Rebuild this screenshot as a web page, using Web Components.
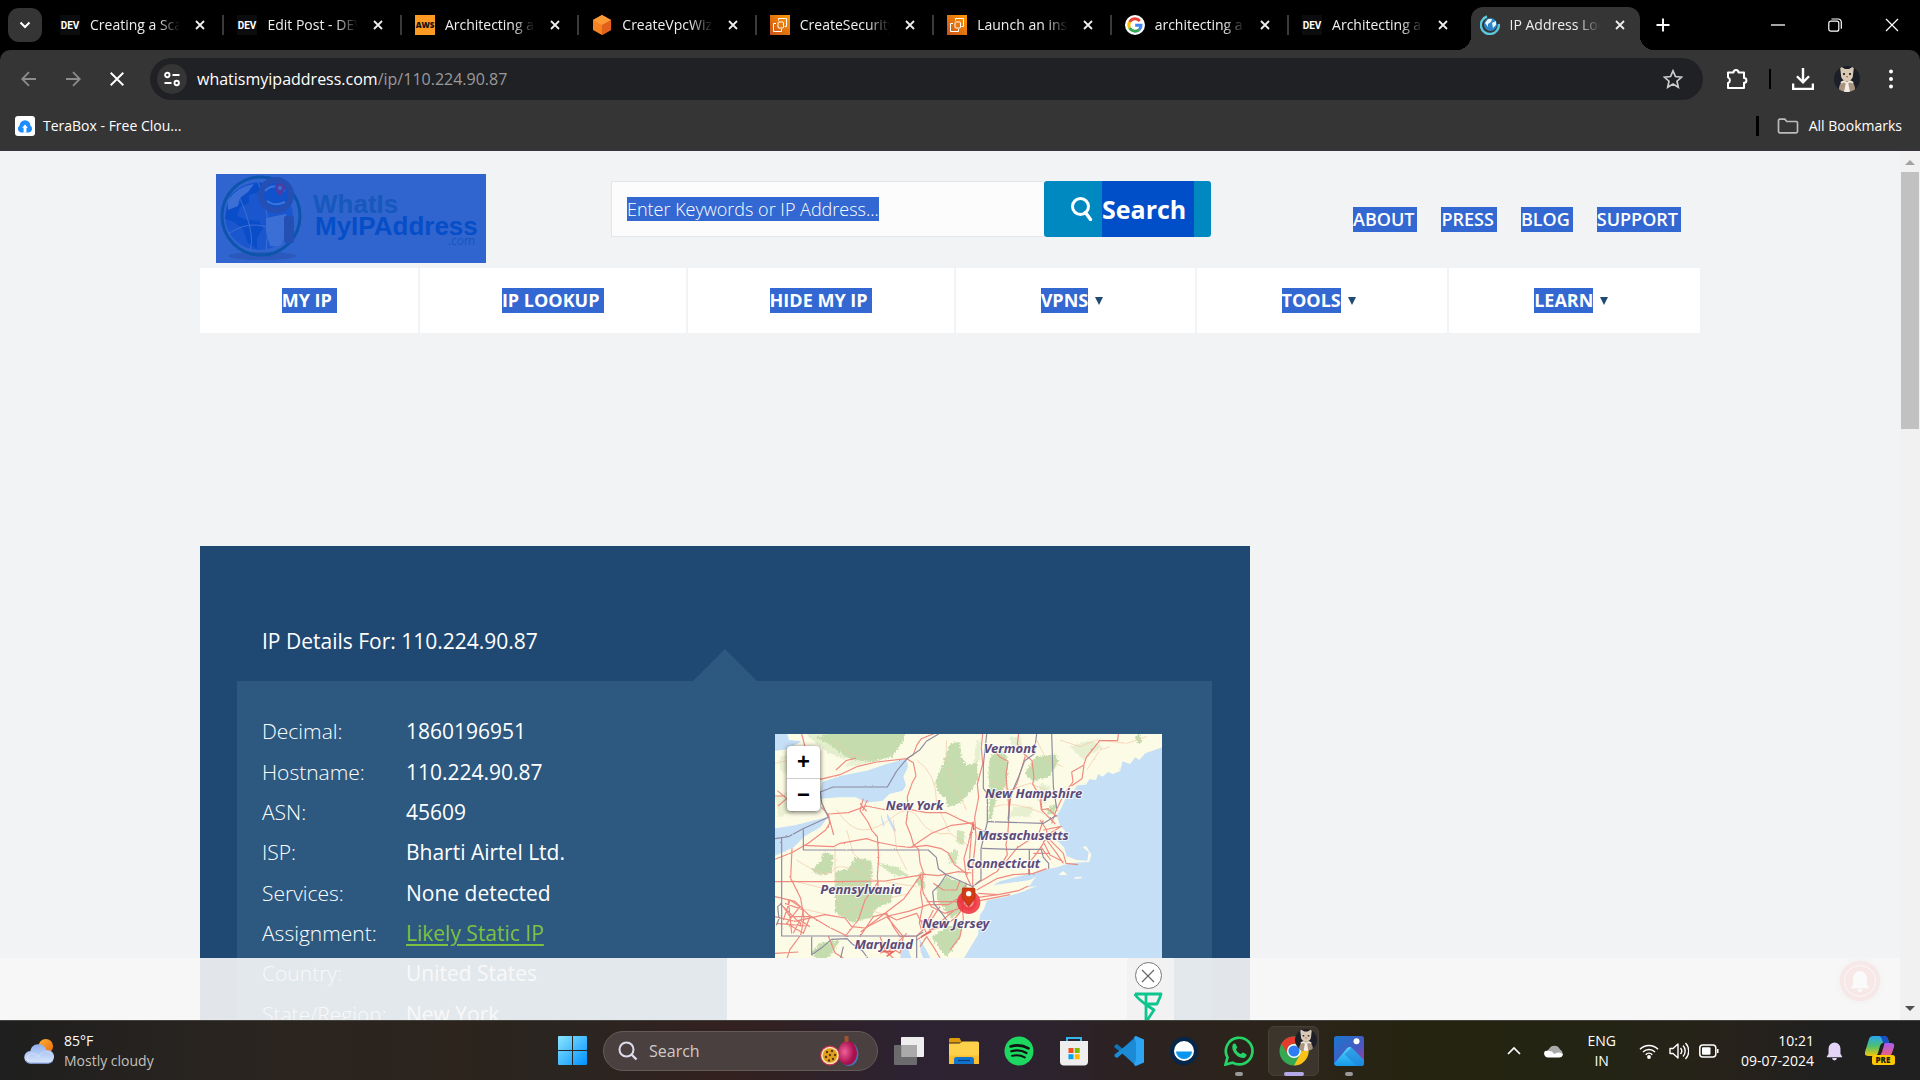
<!DOCTYPE html>
<html lang="en">
<head>
<meta charset="utf-8">
<title>IP Address Lookup</title>
<style>
  html, body { height: 100%; margin: 0; }
  body {
    display: flex;
    flex-direction: column;
    overflow: hidden;
    background: #000;
    font-family: "Open Sans", "Noto Sans", sans-serif;
  }
  site-page { flex: 1; min-height: 0; }
</style>
</head>
<body>

<tab-strip>
  <browser-tab icon="dev">Creating a Scal</browser-tab>
  <browser-tab icon="dev">Edit Post - DEV</browser-tab>
  <browser-tab icon="aws">Architecting a</browser-tab>
  <browser-tab icon="vpc">CreateVpcWiz</browser-tab>
  <browser-tab icon="ec2">CreateSecurity</browser-tab>
  <browser-tab icon="ec2">Launch an inst</browser-tab>
  <browser-tab icon="google">architecting a</browser-tab>
  <browser-tab icon="dev">Architecting a</browser-tab>
  <browser-tab icon="globe" active>IP Address Loo</browser-tab>
</tab-strip>

<address-bar host="whatismyipaddress.com" path="/ip/110.224.90.87"></address-bar>
<bookmark-bar>TeraBox - Free Clou...</bookmark-bar>

<site-page>
  <site-header></site-header>
  <site-nav>
    <nav-item>MY IP&nbsp;</nav-item>
    <nav-item>IP LOOKUP&nbsp;</nav-item>
    <nav-item>HIDE MY IP&nbsp;</nav-item>
    <nav-item menu>VPNS</nav-item>
    <nav-item menu>TOOLS</nav-item>
    <nav-item menu>LEARN</nav-item>
  </site-nav>
  <ip-details ip="110.224.90.87"></ip-details>
  <ad-banner slot="overlay"></ad-banner>
</site-page>

<task-bar></task-bar>

<script>
// name: [viewBox, markup]
const ICONS = {
  dev: ['0 0 20 20', `<rect width="20" height="20" fill="#0b0c0e"/><text x="10" y="14" text-anchor="middle" font-family="Roboto" font-weight="700" font-size="10" fill="#fff">DEV</text>`],
  aws: ['0 0 20 20', `<rect width="20" height="20" fill="#ff9a22"/><text x="10" y="13" text-anchor="middle" font-family="Open Sans" font-weight="800" font-size="8" fill="#111">AWS</text>`],
  vpc: ['0 0 20 20', `<path d="M10 0l9 5v10l-9 5-9-5V5z" fill="#f58220"/><path d="M10 0l9 5-9 5-9-5z" fill="#fb9a35"/><path d="M10 10l9-5v10l-9 5z" fill="#e2601b"/>`],
  ec2: ['0 0 20 20', `<defs><linearGradient id="g" x1="0" y1="1" x2="1" y2="0"><stop offset="0" stop-color="#c8511b"/><stop offset="1" stop-color="#ff9900"/></linearGradient></defs><rect width="20" height="20" fill="url(#g)"/><g fill="none" stroke="#fff" stroke-width="1"><rect x="8" y="7" width="5.500" height="6" rx="1"/><path d="M8.500 5.500V3.500h8v8h-2M6 8.500H3.500v8h8V14"/></g>`],
  google: ['0 0 20 20', `<circle cx="10" cy="10" r="10" fill="#fff"/><g fill="none" stroke-width="3"><path d="M14.800 6A6.200 6.200 0 0 0 4.600 7" stroke="#ea4335"/><path d="M4.600 7a6.200 6.200 0 0 0 0 6" stroke="#fbbc05"/><path d="M4.600 13a6.200 6.200 0 0 0 9.600 1.600" stroke="#34a853"/><path d="M14.200 14.600A6 6 0 0 0 16 10.200H10.200" stroke="#4285f4"/></g>`],
  globe: ['0 0 20 20', `<path d="M7 1.500A9 9 0 1 0 18.800 9" fill="none" stroke="#5cc8dc" stroke-width="2.400"/><circle cx="10.500" cy="9.500" r="6.500" fill="#2a86c8"/><path d="M5 8l3-4 4 0-1 3-3 2 0 3zM12 8l4-2 0 4-3 3z" fill="#e8f4fb"/>`],
  close: ['0 0 10 10', `<path d="M1 1l8 8M9 1l-8 8" stroke="currentColor" stroke-width="1.800"/>`],
  thinClose: ['0 0 14 14', `<path d="M1 1l12 12M13 1L1 13" stroke="currentColor" stroke-width="1.200"/>`],
  stop: ['0 0 14 14', `<path d="M1.500 1.500l11 11M12.500 1.500l-11 11" stroke="currentColor" stroke-width="1.700"/>`],
  minus: ['0 0 14 14', `<path d="M0 7h14" stroke="currentColor" stroke-width="1.300"/>`],
  restore: ['0 0 14 14', `<g fill="none" stroke="currentColor" stroke-width="1.200"><rect x=".8" y="3.200" width="10" height="10" rx="2"/><path d="M3.500 1h6.500a3.300 3.300 0 0 1 3.300 3.300v6.500"/></g>`],
  plus: ['0 0 14 14', `<path d="M7 .5v13M.5 7h13" stroke="currentColor" stroke-width="1.900"/>`],
  chevron: ['0 0 12 8', `<path d="M1.500 1.500L6 6l4.500-4.500" fill="none" stroke="currentColor" stroke-width="2"/>`],
  up: ['0 0 14 9', `<path d="M1 8l6-6 6 6" fill="none" stroke="currentColor" stroke-width="1.700"/>`],
  back: ['0 0 16 16', `<path d="M15 8H1.500M8 1.200L1.200 8 8 14.800" fill="none" stroke="currentColor" stroke-width="1.800"/>`],
  forward: ['0 0 16 16', `<path d="M1 8h13.500M8 1.200L14.800 8 8 14.800" fill="none" stroke="currentColor" stroke-width="1.800"/>`],
  tune: ['0 0 16 14', `<g fill="none" stroke="currentColor" stroke-width="1.900"><circle cx="3.300" cy="3" r="2.200"/><path d="M8.500 3H15.500M.5 11H7.500"/><circle cx="12.700" cy="11" r="2.200"/></g>`],
  terabox: ['0 0 20 20', `<rect width="20" height="20" rx="3" fill="#fff"/><path d="M6 16.500A3.800 3.800 0 0 1 4.600 9.600 5.400 5.400 0 0 1 15.400 9.600 3.800 3.800 0 0 1 14 16.500z" fill="#1e8cff"/><path d="M10 8.500l-2.800 3.300h1.400v5h2.800v-5h1.400z" fill="#fff"/>`],
  star: ['0 0 20 20', `<path d="M10 1.800l2.500 5.700 6.100.6-4.600 4.100 1.300 6.100L10 15.100l-5.300 3.200L6 12.200 1.400 8.100l6.100-.6z" fill="none" stroke="currentColor" stroke-width="1.700"/>`],
  puzzle: ['0 0 22 22', `<path d="M2 4.500h5.500a2.500 2.500 0 0 1 5 0H18v5.500a2.400 2.400 0 0 1 0 4.800V20H2v-5a3 3 0 0 0 0-5.600z" fill="none" stroke="currentColor" stroke-width="2" stroke-linejoin="round"/>`],
  download: ['0 0 20 20', `<path d="M10 0v12M4.500 7.500L10 13l5.500-5.500M1 14v5h18v-5" fill="none" stroke="currentColor" stroke-width="2.200"/>`],
  cat: ['0 0 26 26', `<defs><clipPath id="c"><circle cx="13" cy="13" r="13"/></clipPath></defs><g clip-path="url(#c)"><rect width="26" height="26" fill="#1d1f28"/><path d="M5 26C4 19 8 14 13 13c5 1 9 6 8 13z" fill="#a99482"/><path d="M7 9L6 0l5 3h4l5-3-1 9c0 4-3 6-6 6s-6-2-6-6z" fill="#d8c9b6"/><path d="M10 26l2-10h2l2 10z" fill="#f3ede6"/><path d="M9 7h2v2H9zM15 7h2v2h-2z" fill="#3c352f"/><path d="M12 10h2l-1 2z" fill="#b65c4c"/><path d="M7 17q3-3 5 0M19 17q-3-3-5 0" fill="none" stroke="#efe4d8" stroke-width="2"/></g>`],
  dots: ['0 0 4 20', `<g fill="currentColor"><circle cx="2" cy="2.500" r="2"/><circle cx="2" cy="10" r="2"/><circle cx="2" cy="17.500" r="2"/></g>`],
  folder: ['0 0 22 16', `<path d="M1.500 2.500a1.300 1.300 0 0 1 1.300-1.300h5l2 2.300h9.400a1.300 1.300 0 0 1 1.300 1.300v8.700a1.300 1.300 0 0 1-1.300 1.300H2.800a1.300 1.300 0 0 1-1.300-1.300z" fill="none" stroke="currentColor" stroke-width="1.700"/>`],
  lens: ['0 0 22 24', `<circle cx="9.500" cy="9.500" r="8" fill="none" stroke="currentColor" stroke-width="3"/><path d="M14.500 15.500l5 7" stroke="currentColor" stroke-width="3.400" stroke-linecap="round"/>`],
  taskLens: ['0 0 20 20', `<circle cx="8.500" cy="8.500" r="7" fill="none" stroke="#dde" stroke-width="2"/><path d="M13.500 13.500l5 5" stroke="#dde" stroke-width="2.400"/>`],
  weather: ['0 0 32 26', `<defs><linearGradient id="w" x1="0" y1="0" x2="0" y2="1"><stop offset="0" stop-color="#8fb0ee"/><stop offset="1" stop-color="#dce8fb"/></linearGradient><linearGradient id="s" x1="0" y1="0" x2="1" y2="1"><stop offset="0" stop-color="#f9b233"/><stop offset="1" stop-color="#f2680c"/></linearGradient></defs><circle cx="22.500" cy="8" r="7.500" fill="url(#s)"/><path d="M7 26a6.500 6.500 0 0 1-.5-13A8.500 8.500 0 0 1 23 12a7 7 0 0 1 2 14z" fill="url(#w)"/><path d="M8 25.500c-6-1-6-9 0-10 4-.5 6 2 7 4 2-6 9-8 14-3" fill="none" stroke="#fff" stroke-opacity=".35"/><path d="M2 23q2 2.500 5 2.500h18q3 0 5-2.500" fill="none" stroke="#7596e0"/>`],
  windows: ['0 0 30 30', `<defs><linearGradient id="n" x1="0" y1="0" x2="1" y2="1"><stop offset="0" stop-color="#8be6ff"/><stop offset="1" stop-color="#0090ff"/></linearGradient></defs><path d="M0 1a1 1 0 0 1 1-1h13v14H0zM15 0h13a1 1 0 0 1 1 1v13H15zM0 15h14v14H1a1 1 0 0 1-1-1zM15 15h14v13a1 1 0 0 1-1 1H15z" fill="url(#n)"/>`],
  fruit: ['0 0 40 30', `<defs><radialGradient id="p" cx=".35" cy=".45"><stop offset="0" stop-color="#f0609a"/><stop offset="1" stop-color="#a80f4c"/></radialGradient></defs><ellipse cx="29" cy="18" rx="9.500" ry="12" fill="#3c78b8"/><ellipse cx="27.500" cy="17" rx="9.500" ry="12" fill="url(#p)"/><path d="M24.500 0h4v6h-4z" fill="#a0522c"/><circle cx="10" cy="19.500" r="10" fill="#c2334d"/><circle cx="10" cy="19.500" r="8.800" fill="#fbe6b8"/><circle cx="10" cy="19.500" r="7.300" fill="#e0a01c"/><g fill="#5d3510"><circle cx="7" cy="16" r="1.200"/><circle cx="12" cy="15" r="1.200"/><circle cx="15" cy="19" r="1.200"/><circle cx="10" cy="19" r="1.200"/><circle cx="6" cy="21" r="1.200"/><circle cx="9" cy="24.500" r="1.200"/><circle cx="13" cy="23" r="1.200"/></g>`],
  taskview: ['0 0 30 28', `<rect x="7" y="0" width="23" height="20" rx="1" fill="#eee"/><rect x="0" y="8" width="23" height="20" rx="1" fill="#777" fill-opacity=".85"/><path d="M7.500 8H23v12H7.500z" fill="#aaa"/>`],
  explorer: ['0 0 30 27', `<path d="M0 2a1.500 1.500 0 0 1 1.500-1.500h9L13 5H0z" fill="#dd9a0c"/><path d="M0 6h10.500l3-2H28.500A1.500 1.500 0 0 1 30 5.500v21H0z" fill="#ffd04a"/><path d="M0 18h30v8.500H0z" fill="#fbc02f"/><path d="M5 26.500V22a2.500 2.500 0 0 1 2.500-2.500h15A2.500 2.500 0 0 1 25 22v4.500z" fill="#1173cc"/><path d="M9 23h12" stroke="#06407e" stroke-width="1.200"/>`],
  spotify: ['0 0 30 30', `<circle cx="15" cy="15" r="14.500" fill="#1ed760"/><g fill="none" stroke="#111" stroke-linecap="round"><path d="M6.500 10.500c6-1.800 13-1 18 1.800" stroke-width="2.600"/><path d="M7.300 15.300c5.300-1.500 11-.8 15.200 1.700" stroke-width="2.200"/><path d="M8 19.800c4.600-1.200 9-.6 12.800 1.600" stroke-width="1.900"/></g>`],
  store: ['0 0 30 30', `<path d="M8 6V2h14v4" fill="none" stroke="#35b5f0" stroke-width="2"/><path d="M1 5h28v20.500a4 4 0 0 1-4 4H5a4 4 0 0 1-4-4z" fill="#eee"/><path d="M9.500 12h5v5h-5z" fill="#f25022"/><path d="M15.700 12h5v5h-5z" fill="#7fba00"/><path d="M9.500 18.200h5v5h-5z" fill="#00a4ef"/><path d="M15.700 18.200h5v5h-5z" fill="#ffb900"/>`],
  vscode: ['0 0 30 30', `<path d="M22 0L8.500 12.500 3 8 .5 9.500v2L22 28z" fill="#1173b8"/><path d="M22 30L8.500 17.500 3 22 .5 20.500v-2L22 2z" fill="#1c8bd6"/><path d="M22 0l8 3.500v23L22 30l-2-1 2-5.500v-17L20 1z" fill="#2ea5f2"/>`],
  disc: ['0 0 30 30', `<circle cx="15" cy="15" r="14" fill="#04264a"/><circle cx="15" cy="15" r="10" fill="#fff"/><path d="M7 15.500h16a8 7.500 0 0 1-16 0z" fill="#0a95f0"/>`],
  whatsapp: ['0 0 30 30', `<path d="M1.500 28.500l2-7A13.300 13.300 0 1 1 8.500 26.600z" fill="none" stroke="#25d366" stroke-width="2.700"/><path d="M8.600 9c.7-1.500 2.500-1.800 3.200-.8l1.400 3c.2.800-1.200 1.900-1.200 2.200.8 2 2.500 3.700 4.900 4.700.6.100 1.500-1.700 2.200-1.500l3.200 1.600c.8.700-.2 3-1.600 3.500-6.500 1.800-14-6.500-12.100-12.700z" fill="#25d366"/>`],
  chrome: ['0 0 30 30', `<circle cx="15" cy="15" r="14.500" fill="#34a853"/><path d="M2.400 7.700A14.500 14.500 0 0 1 27.600 7.700H15A7 7 0 0 0 9 18.500z" fill="#e33b2e"/><path d="M27.600 7.700A14.500 14.500 0 0 1 15 29.500l6-11a7 7 0 0 0-6-10.800z" fill="#fbc116"/><circle cx="15" cy="15" r="7" fill="#fff"/><circle cx="15" cy="15" r="5.600" fill="#2f7df4"/>`],
  photos: ['0 0 26 26', `<defs><linearGradient id="h" x1="0" y1="0" x2="1" y2="1"><stop offset="0" stop-color="#1878d0"/><stop offset=".6" stop-color="#4a58c0"/><stop offset="1" stop-color="#b03a90"/></linearGradient><linearGradient id="m" x1="0" y1="0" x2="0" y2="1"><stop offset="0" stop-color="#58d6ff"/><stop offset="1" stop-color="#1598e8"/></linearGradient></defs><rect width="26" height="26" rx="2.500" fill="url(#h)"/><path d="M0 24L11.500 10.500q2-2 4 0L26 21v2.500a2.500 2.500 0 0 1-2.500 2.500H2z" fill="url(#m)"/><path d="M15 10l11 10.500v3a2.500 2.500 0 0 1-2.500 2.500H20L9 16z" fill="#1f80d8" fill-opacity=".6"/><circle cx="19.500" cy="4.500" r="2.600" fill="#fff"/>`],
  cloud: ['0 0 20 14', `<path d="M5 13a4.500 4.500 0 0 1 0-8 6 6 0 0 1 11 .5A4 4 0 0 1 16 13z" fill="#aaa"/><path d="M4 13.500a4 4 0 0 1-3-6.500q7-1 9 3 5-3 9 0-.5 3.500-4 3.500z" fill="#fff"/>`],
  wifi: ['0 0 20 16', `<g fill="none" stroke="#fff" stroke-width="1.500"><path d="M1 6.200a12.700 12.700 0 0 1 18 0M4 9a8.500 8.500 0 0 1 12 0M6.700 11.700a4.700 4.700 0 0 1 6.600 0"/></g><circle cx="10" cy="14" r="1.900" fill="#fff"/>`],
  volume: ['0 0 20 18', `<path d="M1 6.500h3L9 2v14l-5-4.500H1zM11.500 6a4.500 4.500 0 0 1 0 6M14 3.500a8 8 0 0 1 0 11M16.500 1a11.500 11.500 0 0 1 0 16" fill="none" stroke="#fff" stroke-width="1.400" stroke-linejoin="round"/>`],
  battery: ['0 0 20 14', `<rect x=".8" y="1" width="16" height="12" rx="3" fill="none" stroke="#fff" stroke-width="1.500"/><rect x="3" y="3.300" width="8.500" height="7.500" rx="1" fill="#fff"/><path d="M18 5h1.500v4H18z" fill="#fff"/>`],
  bell: ['0 0 18 20', `<path d="M9 1a6.300 6.300 0 0 0-6.300 6.300V13L.8 16v.5h16.400V16l-1.900-3V7.300A6.300 6.300 0 0 0 9 1zM6.500 17.500h5a2.500 2.500 0 0 1-5 0z" fill="currentColor"/>`],
  copilot: ['0 0 30 29', `<defs><linearGradient id="a" x1="0" y1="0" x2="0" y2="1"><stop offset="0" stop-color="#2aa5f5"/><stop offset=".5" stop-color="#4cc070"/><stop offset="1" stop-color="#f5c60a"/></linearGradient><linearGradient id="b" x1="0" y1="0" x2="0" y2="1"><stop offset="0" stop-color="#a45cf0"/><stop offset="1" stop-color="#f2607a"/></linearGradient></defs><path d="M8 0h11q3 0 4 3l1 4h-6q-2 0-3 3l-2 7q-1 3-4 3H3q-4 0-3-4L4 3q1-3 4-3z" fill="url(#a)"/><path d="M14 0h5q3 0 4 3l1 4h-6q-1-6-4-7z" fill="#1a50c8"/><path d="M20 7h6q4 0 3 4l-2 6q-1 3-4 3h-9q2-1 3-4l2-7q0-2 1-2z" fill="url(#b)"/><rect x="7" y="19" width="23" height="10" rx="2.500" fill="#ffc800"/><text x="18" y="27" text-anchor="middle" font-family="Open Sans" font-weight="800" font-size="8" fill="#221">PRE</text>`],
  adMark: ['0 0 30 30', `<path d="M2 2h26q0 1-4 10H14.500M2 2q0 2 10 10l9 6-8 12V2M2 2h11" fill="none" stroke="#0ec58e" stroke-width="2.800" stroke-linejoin="round"/>`],
};

function mount(el, html) {
  const root = el.attachShadow({ mode: 'open' });
  const tpl = document.createElement('template');
  tpl.innerHTML = html;
  root.appendChild(tpl.content.cloneNode(true));
  return root;
}

// ui-icon: inline svg by name
class UiIcon extends HTMLElement {
  connectedCallback() {
    if (this.shadowRoot) return;
    const [box, body] = ICONS[this.getAttribute('name')];
    mount(this, `
      <style>
        :host { display: block; width: 20px; height: 20px; flex: none; }
        svg { display: block; width: 100%; height: 100%; }
      </style>
      <svg viewBox="${box}" aria-hidden="true">${body}</svg>
    `);
  }
}
customElements.define('ui-icon', UiIcon);

const buttonReset = `
  button { border: 0; padding: 0; background: none; color: inherit; font: inherit;
    display: flex; align-items: center; justify-content: center; }
`;

class TabStrip extends HTMLElement {
  constructor() {
    super();
    mount(this, `
      <style>
        ${buttonReset}
        :host { display: flex; height: 50px; background: #000; color: #fff; flex: none; }
        .search { width: 34px; height: 34px; margin: 8px 5px 8px 8px; border-radius: 11px; background: #353535; }
        .search ui-icon { width: 12px; height: 8px; }
        .tabs { flex: 1; min-width: 0; display: flex; }
        .new { width: 38px; height: 50px; margin-right: 67px; }
        .new ui-icon, .win ui-icon { width: 14px; height: 14px; }
        .win { width: 57px; height: 50px; }
      </style>
      <button class="search" aria-label="Search tabs"><ui-icon name="chevron"></ui-icon></button>
      <div class="tabs"><slot></slot></div>
      <button class="new" aria-label="New tab"><ui-icon name="plus"></ui-icon></button>
      <button class="win" aria-label="Minimise"><ui-icon name="minus"></ui-icon></button>
      <button class="win" aria-label="Restore"><ui-icon name="restore"></ui-icon></button>
      <button class="win" aria-label="Close window"><ui-icon name="thinClose"></ui-icon></button>
    `);
  }
}
customElements.define('tab-strip', TabStrip);

class BrowserTab extends HTMLElement {
  connectedCallback() {
    if (this.shadowRoot) return;
    mount(this, `
      <style>
        ${buttonReset}
        :host { flex: 1 1 0; min-width: 0; display: flex; padding: 7px 4px 0; position: relative; color: #eee; font-size: 14px; }
        .body { flex: 1; min-width: 0; display: flex; align-items: center; padding: 0 12px 7px 9px; position: relative; }
        .title {
          flex: 1; min-width: 0; margin: 0 12px 0 10px; overflow: hidden; white-space: nowrap; line-height: 20px;
          -webkit-mask-image: linear-gradient(90deg, #000 75%, transparent);
          mask-image: linear-gradient(90deg, #000 75%, transparent);
        }
        button { width: 16px; height: 20px; }
        button ui-icon { width: 10px; height: 10px; }
        :host(:not([active]))::after {
          content: ""; position: absolute; right: 0; top: 15px; width: 2px; height: 20px; background: #3a3a3a;
        }
        :host([active]) .body { background: #353535; border-radius: 12px 12px 0 0; }
        :host([active]) .body::before, :host([active]) .body::after {
          content: ""; position: absolute; bottom: 0; width: 14px; height: 14px;
        }
        :host([active]) .body::before { right: 100%; background: radial-gradient(circle at 0 0, #000 14px, #353535 14px); }
        :host([active]) .body::after { left: 100%; background: radial-gradient(circle at 100% 0, #000 14px, #353535 14px); }
      </style>
      <div class="body">
        <ui-icon name="${this.getAttribute('icon')}"></ui-icon>
        <span class="title"><slot></slot></span>
        <button aria-label="Close tab"><ui-icon name="close"></ui-icon></button>
      </div>
    `);
    if (this.hasAttribute('active')) return;
    // the last divider is hidden by the active tab's curve
    const next = this.nextElementSibling;
    if (next && next.hasAttribute('active')) {
      const s = document.createElement('style');
      s.textContent = ':host(:not([active]))::after { display: none; }';
      this.shadowRoot.appendChild(s);
    }
  }
}
customElements.define('browser-tab', BrowserTab);

class AddressBar extends HTMLElement {
  connectedCallback() {
    if (this.shadowRoot) return;
    mount(this, `
      <style>
        ${buttonReset}
        :host { display: block; background: #000; color: #fff; flex: none; }
        .bar { display: flex; align-items: center; padding: 8px 7px 1px; background: #353535; border-radius: 10px 10px 0 0; }
        button { width: 44px; height: 42px; }
        button ui-icon { width: 16px; height: 16px; }
        .off { color: #8c8c8c; }
        .pill { flex: 1; height: 42px; margin: 0 12px 0 11px; padding: 0 20px 0 7px; border-radius: 21px; background: #202125;
          display: flex; align-items: center; }
        .pill .chip { width: 30px; height: 30px; border-radius: 15px; background: #353535; margin-right: 10px; }
        .pill .star { width: 20px; color: #ccc; }
        .star ui-icon { width: 20px; height: 20px; }
        .field { flex: 1; display: grid; align-items: center; }
        .field > * { grid-area: 1 / 1; }
        input { border: 0; padding: 0; background: none; outline: 0; height: 30px; font: inherit; color: inherit; }
        label { font-size: 16px; line-height: 24px; }
        label span { color: #9a9a9a; }
        .sep { width: 2px; height: 20px; margin: 0 10px; background: #000; }
        .tools ui-icon { width: 22px; height: 22px; }
        .tools { display: flex; align-items: center; }
        .tools .cat { width: 26px; height: 26px; }
        .tools .dots { width: 4px; height: 20px; }
      </style>
      <div class="bar">
        <button class="off" aria-label="Back"><ui-icon name="back"></ui-icon></button>
        <button class="off" aria-label="Forward"><ui-icon name="forward"></ui-icon></button>
        <button aria-label="Stop"><ui-icon name="stop"></ui-icon></button>
        <div class="pill">
          <button class="chip" aria-label="Site information"><ui-icon name="tune"></ui-icon></button>
          <div class="field">
            <input id="url" type="text">
            <label for="url">${this.getAttribute('host')}<span>${this.getAttribute('path')}</span></label>
          </div>
          <button class="star" aria-label="Bookmark"><ui-icon name="star"></ui-icon></button>
        </div>
        <div class="tools">
          <button aria-label="Extensions"><ui-icon name="puzzle"></ui-icon></button>
          <div class="sep"></div>
          <button aria-label="Downloads"><ui-icon name="download"></ui-icon></button>
          <button aria-label="Profile"><ui-icon class="cat" name="cat"></ui-icon></button>
          <button aria-label="Menu"><ui-icon class="dots" name="dots"></ui-icon></button>
        </div>
      </div>
    `);
  }
}
customElements.define('address-bar', AddressBar);

class BookmarkBar extends HTMLElement {
  constructor() {
    super();
    mount(this, `
      <style>
        :host { display: flex; align-items: center; height: 49px; padding: 0 18px 0 15px; flex: none;
          background: #353535; border-bottom: 1px solid #3b3440; color: #fff; font-size: 14px; line-height: 20px; }
        a { display: flex; align-items: center; gap: 8px; color: inherit; text-decoration: none; }
        .all { margin-left: auto; gap: 10px; }
        .all::before { content: ""; width: 3px; height: 20px; margin-right: 8px; background: #000; }
        .all ui-icon { width: 22px; height: 16px; color: #bbb; }
      </style>
      <a href="#"><ui-icon name="terabox"></ui-icon><slot></slot></a>
      <a class="all" href="#"><ui-icon name="folder"></ui-icon>All Bookmarks</a>
    `);
  }
}
customElements.define('bookmark-bar', BookmarkBar);

// page viewport with its scrollbar; the "overlay" slot sits on the bottom edge
class SitePage extends HTMLElement {
  constructor() {
    super();
    mount(this, `
      <style>
        :host { display: flex; position: relative; overflow: hidden; background: #f1f3f5; }
        main { flex: 1; min-width: 0; }
        .inner { max-width: 1500px; margin: 0 auto; }
        .scroll { width: 20px; background: #f1f1f1; display: flex; flex-direction: column; align-items: center; }
        .scroll i { width: 0; height: 0; border: 5px solid transparent; }
        .scroll .up { border-bottom-color: #a3a3a3; margin: 4px 0 7px; }
        .scroll .down { border-top-color: #505050; margin: auto 0 4px; }
        .thumb { width: 18px; height: 257px; background: #c1c1c1; }
        .overlay { position: absolute; left: 0; right: 20px; bottom: 0; }
      </style>
      <main><div class="inner"><slot></slot></div></main>
      <div class="scroll"><i class="up"></i><div class="thumb"></div><i class="down"></i></div>
      <div class="overlay"><slot name="overlay"></slot></div>
    `);
  }
}
customElements.define('site-page', SitePage);

class SiteHeader extends HTMLElement {
  constructor() {
    super();
    mount(this, `
      <style>
        :host { display: flex; align-items: flex-start; padding: 23px 19px 5px 16px; }
        .logo { display: block; width: 270px; height: 89px; }
        .logo svg { display: block; }
        form { display: flex; flex: 0 0 600px; margin: 7px 0 0 125px; }
        .field { flex: 1; display: grid; align-items: center; background: #fcfcfc; border: 1px solid #e2e5e9; border-right: 0; }
        .field > * { grid-area: 1 / 1; }
        input { border: 0; background: none; outline: 0; height: 54px; padding: 0 15px; font: inherit; }
        label { justify-self: start; margin-left: 15px; font-size: 18px; font-weight: 300; line-height: 24px; }
        mark { background: #3367d1; color: #fff; }
        label mark { display: block; }
        button { display: flex; align-items: center; width: 167px; height: 56px; padding: 0 0 0 27px; border: 0; border-radius: 3px;
          background: #0089c0; color: #fff; font: 700 25px/56px "Open Sans", sans-serif; }
        button ui-icon { width: 22px; height: 24px; margin-right: 9px; }
        button mark { background: #004ec8; padding-right: 8px; }
        nav { display: flex; gap: 24px; margin: 33px 0 0 auto; }
        nav a { font-size: 18px; font-weight: 600; line-height: 25px; padding-right: 3px; color: #fff; background: #3367d1; text-decoration: none; }
      </style>
      <a class="logo" href="#" aria-label="Home">
        <svg width="270" height="89" viewBox="0 0 270 89">
          <rect width="270" height="89" fill="#3065cf"/>
          <ellipse cx="46" cy="82" rx="34" ry="4" fill="#2a58bd"/>
          <circle cx="45" cy="42" r="39" fill="none" stroke="#0d55ac" stroke-width="3"/>
          <circle cx="43" cy="42" r="34" fill="#1a57cf"/>
          <path d="M14 22Q26 9 46 9l-3 9-10 3 0 8-9 4-3 9 10 4 12 1 4 7-6 10 0 11-9-6-5-14-9-7-9-3z" fill="#0a4dc8"/>
          <path d="M12 26q10-14 26-16l-6 8-8 6-2 8-10 4zM50 44l20-4 4 14-10 18-10 0-4-14z" fill="#3c6fd5"/>
          <path d="M12 60Q40 40 70 64M22 20Q40 60 34 76M42 8Q56 40 50 76" fill="none" stroke="#3c6fd5"/>
          <circle cx="60" cy="21" r="15" fill="#0f52cc" stroke="#244fb5" stroke-width="6"/>
          <path d="M49 17q8-9 20 0M51 27q8 6 18 1" stroke="#3b74da" stroke-width="2" fill="none"/>
          <path d="M64 23c-2-4-5-6-5-9a5 5 0 0 1 10 0c0 3-3 5-5 9z" fill="#4b3ea5"/>
          <circle cx="64" cy="14" r="2" fill="#3a70d8"/>
          <rect x="68" y="42" width="10" height="27" rx="2" fill="#2450b4"/>
          <g font-family="Liberation Sans" font-weight="700" font-size="26">
            <text x="97" y="39" fill="#1758bd">WhatIs</text>
            <text x="99" y="61" fill="#064ec8">MyIPAddress</text>
          </g>
          <text x="259" y="71" text-anchor="end" font-family="Open Sans" font-size="12" fill="#1655c0">.com</text>
        </svg>
      </a>
      <form onsubmit="return false">
        <div class="field">
          <input id="q" type="text">
          <label for="q"><mark>Enter Keywords or IP Address...</mark></label>
        </div>
        <button type="submit"><ui-icon name="lens"></ui-icon><mark>Search</mark></button>
      </form>
      <nav>
        <a href="#">ABOUT</a><a href="#">PRESS</a><a href="#">BLOG</a><a href="#">SUPPORT</a>
      </nav>
    `);
  }
}
customElements.define('site-header', SiteHeader);

class SiteNav extends HTMLElement {
  constructor() {
    super();
    mount(this, `
      <style>:host { display: flex; gap: 2px; }</style>
      <slot></slot>
    `);
  }
}
customElements.define('site-nav', SiteNav);

class NavItem extends HTMLElement {
  constructor() {
    super();
    mount(this, `
      <style>
        :host { display: flex; flex: 1 0 auto; justify-content: center; align-items: center; height: 65px; background: #fff; }
        :host([menu]) { padding: 0 3px; }
        a { font-size: 18px; font-weight: 700; line-height: 25px; color: #fff; background: #3367d1; text-decoration: none; }
        i { display: none; margin: 0 7px; border: 4px solid transparent; border-top: 8px solid #1f4a73; border-bottom: 0; }
        :host([menu]) i { display: block; }
      </style>
      <a href="#"><slot></slot></a><i></i>
    `);
  }
}
customElements.define('nav-item', NavItem);

class StateMap extends HTMLElement {
  constructor() {
    super();
    mount(this, `
      <style>
        :host { display: block; position: relative; overflow: hidden; background: #c5dff6; }
        svg { display: block; width: 100%; }
        .zoom { position: absolute; left: 12px; top: 12px; width: 33px; background: #fff; border-radius: 4px; box-shadow: 0 1px 5px rgba(0,0,0,.65); }
        button { display: block; width: 100%; height: 32px; padding: 0; border: 0; background: none; color: #000;
          font: 700 22px/32px "Liberation Sans", sans-serif; }
        button + button { border-top: 1px solid #ccc; height: 33px; }
      </style>
      <svg viewBox="45 42 1161 900">
        <defs>
          <filter id="rough" x="0" y="0" width="1" height="1" filterUnits="objectBoundingBox">
            <feTurbulence type="fractalNoise" baseFrequency=".15" numOctaves="3" seed="4"/>
            <feDisplacementMap in="SourceGraphic" scale="16" xChannelSelector="R" yChannelSelector="G"/>
          </filter>
          <filter id="coast" x="0" y="0" width="1" height="1">
            <feTurbulence type="fractalNoise" baseFrequency=".12" numOctaves="2" seed="9"/>
            <feDisplacementMap in="SourceGraphic" scale="5" xChannelSelector="R" yChannelSelector="G"/>
          </filter>
        </defs>
        <rect x="45" y="42" width="1161" height="900" fill="#fcfbe6"/>
        <g fill="#c5ddae" filter="url(#rough)">
          <path d="M0 0h1v1H0zM1300 1000h1v1h-1z" fill="none" stroke="none"/>
          <path d="M240 30h200l-15 40-30 40-60 16-65-8-50-36-50-30z"/>
          <path d="M130 30l90 10 45 18 20 40-30 20-50-20-40-30z" fill-opacity=".45"/>
          <path d="M45 230l50-20 40 20-20 40-60 20zM60 110l60-10 40 40-40 30-60-20zM300 100l100-10-60 40-90 10z" fill-opacity=".35"/>
          <path d="M525 190l15-40 30-80 30-5 5 50 15 20 30-5 5 50-25 35-30 35-35 10-10-30-20-10z"/>
          <path d="M690 110l30-25 20 25 5 50-10 40-25 30-15 70-10 0 5-80-5-60z"/>
          <path d="M795 160l30-48 65-10 5 25-30 45-45 10z"/>
          <path d="M155 450l25-25 10-30 30 10-5 55-40 5z"/>
          <path d="M225 455l40-8 20-35 50 10 0 30 0 50 60 15 0 30-50 20-10 25-60 15-50-30z"/>
          <path d="M530 500l30-30 60 25 10 30-15 40-40 30-25-30-20-30zM490 450l-25 35 30 25z"/>
          <path d="M515 650l45-30 45-15-5 50-40 55-20-20z"/>
          <path d="M860 265l30-15-5 30-20 5zM1125 50l12-10 10 25-12 8zM150 700l30-30 60-10-20 35-30 30z"/>
          <path d="M590 330l25 5-5 40-20-5zM565 395l30-5-5 40-20 0zM350 430l60 10 40 30-50-5z" fill-opacity=".8"/>
          <path d="M650 60l15 0-5 60-20 20zM750 50l30 0 10 40-30 10zM840 190l30 10-10 50-30-10zM760 260l60 0-10 30-60 0zM930 80l60-20 40 20-60 40z" fill-opacity=".4"/>
        </g>
        <g fill="#c5dff6" filter="url(#coast)">
          <path d="M1260 62l-104 38-18 20-12-8-16 20-22-8-8 30-22 8-14-6-16 14-14-8-6 18-20-2-10 16-26 2-16 22-18 14-14 32-14 22 10 30 16 18-16 12-8 16 20 20 8 26 30 12 32 2 4-26-18-14 10-4 16 26-6 22-46 2-30 6-20 8-32 6-38 10-42 10-60 16-20 12 40-6 70-10 18-10-32 42-64 20-50 6-10 30-12 16-6 60-24 40-20 34v220h700z"/>
          <path d="M180 218l6-32 64-20 70-14 60-20 60-16 4 24-14 30 8 26-10 16-40 10-20 20-50 6-30-16-50 0-58 4z"/>
          <path d="M0 332l105-16 100-26-24 32-46 26-34 34-101 46z"/>
          <path d="M0 20h75l12 40 38 4-44 24-81 10zM420 690l20-16 14 40 0 200h-20l-6-140zM478 655l18 30 16 30 0 60-30-80z"/>
          <path d="M364 285l10 30-4 6-8-34zM382 280l26 50-4 10-24-50z"/>
        </g>
        <path d="M648 532l40-20 74-6 30-14 24-2-14 12 30-4-66 24-66 16-52 10zM895 465l14-12 14 12zM942 472l24-2-2 5-18 2z" fill="#fcfbe6"/>
        <g filter="url(#coast)">
          <g fill="none" stroke="#f5c4a8" stroke-width="2">
            <path d="M45 130q60-20 130 10M220 60q60 60 100 50M110 420q90 60 110 30t120 30l130 20M230 270q40 60 80 60t90-40 80 10 90 40l60 40M90 480l120 30 90-20 60 50 90-20M225 380v130l20 60M690 180l60 30 60-20 70 30M700 260q60-20 150 20M900 60l60 20 50-20 90 10 60-20M980 150l40-60 30-10"/>
            <path d="M470 120q60 40 60 130l40 90M560 60q-10 80 30 150l30 60M100 560l130 30 70-30 90 30M830 60l30 60 50 20M260 330l20 70 60 60M400 300l10 90 30 60"/>
          </g>
          <g fill="none" stroke="#f08a80" stroke-width="3.500" stroke-linejoin="round">
            <path d="M180 178l60-14 50-24 60-14 90-10 20-12 10-28 14-20 50-20"/>
            <path d="M228 150l30-28 30-8M125 42l8 30 8 34M45 228h30M52 212l28 24-26 22"/>
            <path d="M440 116l20 12 8 40-12 22-14 40 2 40-6 40 14 34 8 28 16 16 4 40 10 30-8 60 6 40-10 50 6 20"/>
            <path d="M185 262l20 22 4 26-12 20-52 40-50 28-50 20M205 282l60-4 54-20 60 12 70-2 50 10 60 0 40 20 46 18"/>
            <path d="M310 236l-10 36 24 34 12 26 16 18 4 60-4 60 4 48M205 285l16 60M300 250l20 24M322 240l-14 32"/>
            <path d="M130 376l90 4 20-10 80-14 30 10 60 12 40 4 50-6 44 10 20 12 20 36 40 30"/>
            <path d="M455 380l60-40 60-24 66-8M668 42l-4 40 4 50-16 60 4 40-12 60 4 60-10 90 0 80"/>
            <path d="M640 305l-14 60-14 50 6 50 14 30M636 320l-10 130M644 320l40 20 60 0 60 4 90-2"/>
            <path d="M694 80l24 30 26 14-6 40 4 50 6 60-4 60-6 40 4 30-30 50-40 24-24 14"/>
            <path d="M776 42l-4 30 20 30 24 20 6 50-4 20 24 40 4 40 40 40M796 108l-24 80-20 40-8 70"/>
            <path d="M890 290l-26-24-20 4-4-30M1075 42l-2 20-54 0-40 50-8 24-36 20 4 30-26 34-24 50-14 40"/>
            <path d="M972 136l-6 40-32 22M840 300l20 30 0 30 30 40 20 30M850 330l50-10M870 340l36-22M850 370l-20 30-24 30 0 30M860 350l50 50 8 30 36 4M830 345l-60 40-40 50M880 345l-30 20 20 40 40 20M842 380l30 40M850 300l-20 60M820 400h50"/>
            <path d="M650 510l60-34 50-12 60-4 40-14M655 532l60-8 60-12 30-14M660 542l90-18M655 520l60 4"/>
            <path d="M96 385l-4 90 30 60 10 60-10 50M45 485h180l130-2 20 0 60-10 60-10 40 4 60-12 40 4"/>
            <path d="M45 590l60 14 90-20 60 10 20 26 40 4 70-36 60-14 60-20 60 0 24-16 40 6M45 530l60 14 40 40 60 36 60 30"/>
            <path d="M70 600l20-60 30 20-40 50 50 30 20-50-60 0-20-30M100 640l20-40 30 20M60 550l60 60M50 610l90 8M75 550l55 20-10 50M85 540l10 100"/>
            <path d="M255 650l40-50 20-60 40-55M300 650l40-60 40-10 20 40 20 30 50-2 20-20M380 590l50 60-10 50M360 650l20 50M372 582l-70 54M372 582l60-46 50-70"/>
            <path d="M480 460l10 60 24 40 40 20 60-20M520 570l-20 40 10 20 40-10 40-30 30-40M470 660l30-20 24-20 60-50M500 640l-30-60-60 20-40-20M500 545h90l40-10M480 600l40 20M540 560l-40 60M600 480l-10 30-40 0-30-20M610 500l-10 50M620 490l-30 60M606 540l4 60-10 50-30 40M480 680l20-30 20 30 20 34"/>
            <path d="M120 648l-30 40-10 30M360 700l30-20 30 20M375 690l30 30M45 700l70-4M440 640l-60 60M205 648l20 50 30 20"/>
          </g>
          <g fill="none" stroke="#e76a62" stroke-width="5">
            <path d="M618 520l16 20M605 530l30 10M612 560l20-20M600 545l40-20M360 695h40l-20 14M855 350l10 10M638 310l4 20M484 650l30-16"/>
          </g>
          <g fill="none" stroke="#8e8a9f" stroke-width="3.500" stroke-linejoin="round">
            <path d="M45 356l40-6 44-24 76-34-20-44-4-32 38-15h163l28-48 30-36 40-28 20-26 36-21"/>
            <path d="M130 328v62h375l24 22 6 34 24 18 80 36 16-14 8-6v-94l19-80v-85l-12-16 0-70 10-93M65 352v296h405l20-12M558 465l-20 30-20 20 4 36 24 30 16 22"/>
            <path d="M830 42l-8 60-28 20-18 48-26 60-5 74M875 42l5 158 10 66M683 305l168 5 39-24M666 385l90 3h88l6 24 16 18v16M808 390v76M155 650v54l34-24 26-22 46-2 16 16 30 20 16 22M250 680l-8 34M470 648v66l6 30M65 550l-12 10 4 36-8 20"/>
          </g>
        </g>
        <g font-family="Noto Sans, Open Sans" font-weight="700" font-style="italic" font-size="39" fill="#5b4b78" stroke="#fff" stroke-opacity=".75" stroke-width="6" paint-order="stroke" text-anchor="middle">
          <text x="750" y="99">Vermont</text>
          <text x="821" y="234">New Hampshire</text>
          <text x="464" y="271">New York</text>
          <text x="789" y="361">Massachusetts</text>
          <text x="730" y="445">Connecticut</text>
          <text x="303" y="523">Pennsylvania</text>
          <text x="587" y="625">New Jersey</text>
          <text x="371" y="686">Maryland</text>
        </g>
        <circle cx="626" cy="547" r="25" fill="#f06a78" fill-opacity=".75" stroke="#ee2f3c" stroke-opacity=".85" stroke-width="20"/>
        <path d="M611 504h30q4 0 4 4v26l-19 26-19-26v-26q0-4 4-4z" fill="#d63a10" stroke="#a82c10" stroke-width="2"/>
        <circle cx="626" cy="521" r="8" fill="#fff"/>
      </svg>
      <div class="zoom">
        <button aria-label="Zoom in">+</button>
        <button aria-label="Zoom out">−</button>
      </div>
    `);
  }
}
customElements.define('state-map', StateMap);

class IpDetails extends HTMLElement {
  connectedCallback() {
    if (this.shadowRoot) return;
    const ip = this.getAttribute('ip');
    const rows = [
      ['Decimal:', '1860196951'],
      ['Hostname:', ip],
      ['ASN:', '45609'],
      ['ISP:', 'Bharti Airtel Ltd.'],
      ['Services:', 'None detected'],
      ['Assignment:', '<a href="#">Likely Static IP</a>'],
      ['Country:', 'United States'],
      ['State/Region:', 'New York'],
    ];
    mount(this, `
      <style>
        :host { display: block; width: 70%; margin-top: 213px; padding: 80px 38px 120px 37px; box-sizing: border-box;
          background: #1f4972; color: #fff; font-size: 21px; line-height: 30px; }
        h1 { margin: 0 0 25px 25px; font-size: 21px; font-weight: 400; }
        .card { position: relative; display: flex; justify-content: space-between; align-items: flex-start;
          padding: 30px 50px 40px 25px; background: #2d5980; }
        .card::before { content: ""; position: absolute; left: 50%; bottom: 100%; margin-left: -32px;
          border: 32px solid transparent; border-top: 0; border-bottom-color: #2d5980; }
        table { border-collapse: collapse; height: 323px; }
        th, td { padding: 0; text-align: left; vertical-align: middle; }
        th { width: 144px; font-weight: 300; }
        td { font-weight: 400; }
        td a { color: #7dc142; text-underline-offset: 3px; }
        state-map { width: 387px; margin-top: 23px; }
      </style>
      <h1>IP Details For: ${ip}</h1>
      <div class="card">
        <table>${rows.map(([k, v]) => `<tr><th scope="row">${k}</th><td>${v}</td></tr>`).join('')}</table>
        <state-map></state-map>
      </div>
    `);
  }
}
customElements.define('ip-details', IpDetails);

class AdBanner extends HTMLElement {
  constructor() {
    super();
    mount(this, `
      <style>
        :host { display: flex; justify-content: center; height: 62px; position: relative; overflow: hidden; background: rgba(247,247,247,.9); }
        .ad { width: 447px; background: #f7f7f7; display: flex; justify-content: flex-end; }
        .side { width: 47px; background: #f3f2f2; display: flex; flex-direction: column; align-items: center; padding-top: 4px; box-sizing: border-box; }
        button { display: flex; align-items: center; justify-content: center; padding: 0; }
        .close { width: 27px; height: 27px; flex: none; margin-right: 4px; border: 1px solid #777; border-radius: 50%; background: #fff; color: #666; }
        .close ui-icon { width: 14px; height: 14px; }
        .mark { width: 30px; height: 30px; margin: 3px 4px 0 0; }
        .notify { position: absolute; right: 20px; top: 3px; width: 40px; height: 40px; border: 0; border-radius: 50%;
          background: #f7e7e7; color: #fafafa; box-shadow: 0 0 10px rgba(0,0,0,.04); }
        .notify::before { content: ""; position: absolute; inset: 4px; border: 1px solid #fafafa; border-radius: 50%; }
        .notify ui-icon { width: 20px; height: 22px; }
      </style>
      <div class="ad"><div class="side">
        <button class="close" aria-label="Close ad"><ui-icon name="thinClose"></ui-icon></button>
        <ui-icon class="mark" name="adMark"></ui-icon>
      </div></div>
      <button class="notify" aria-label="Notifications"><ui-icon name="bell"></ui-icon></button>
    `);
  }
}
customElements.define('ad-banner', AdBanner);

class TaskBar extends HTMLElement {
  constructor() {
    super();
    mount(this, `
      <style>
        ${buttonReset}
        :host { display: grid; grid-template-columns: 1fr auto 1fr; align-items: center; height: 59px; flex: none;
          border-top: 1px solid #45433f; color: #fff; font-size: 14px; line-height: 20px;
          background: linear-gradient(90deg, #1f1f1f, #2b2520 14%, #2c241d 24%, #2a2520 29%, #33211f 38%, #2d2231 47%, #2d2331 53%, #2c221f 60%, #2c241a 68%, #24240f 74%, #232414 83%, #27221a 90%, #202020 95%); }
        .weather { justify-self: start; gap: 9px; padding-left: 24px; text-align: left; }
        .weather ui-icon { width: 31px; height: 26px; }
        .weather small { display: block; font-size: 14px; color: #c4c0bd; }
        .apps { display: flex; align-items: center; padding-left: 13px; }
        .apps button { width: 55px; height: 58px; position: relative; }
        .apps ui-icon { width: 30px; height: 30px; }
        .apps .start { width: 31px; margin-right: 15px; }
        .find { display: flex; align-items: center; box-sizing: border-box; width: 275px; height: 40px; margin-right: 3px; padding: 0 17px 0 14px;
          border: 1px solid #645a58; border-radius: 20px; background: #4a403f; }
        .find label { display: flex; }
        .find ui-icon { width: 20px; height: 20px; }
        .find input { flex: 1; min-width: 0; margin-left: 11px; padding: 0; border: 0; outline: 0; background: none; font: 400 16px/24px "Open Sans", sans-serif; color: #fff; }
        .find input::placeholder { color: #d0cac8; opacity: 1; }
        .find .fruit { width: 40px; height: 30px; }
        .apps .run::after { content: ""; position: absolute; bottom: 4px; left: 50%; width: 8px; height: 4px; margin-left: -4px; border-radius: 2px; background: #999; }
        .apps .on::before { content: ""; position: absolute; inset: 4px 2px; border: 1px solid #46403a; border-radius: 6px; background: #3c352c; }
        .apps .on::after { width: 20px; margin-left: -10px; background: #b4a8e8; }
        .apps .on ui-icon { position: relative; }
        .apps .on .cat { position: absolute; right: 4px; top: 7px; width: 22px; height: 22px; }
        .tray { display: flex; align-items: center; justify-content: flex-end; padding-right: 25px; }
        .tray .up { width: 14px; height: 9px; }
        .tray button { margin-right: 23px; }
        .tray .lang { margin: 0 23px; text-align: center; }
        .tray .time { margin: 0 12px 0 22px; text-align: right; }
        .tray .gap { margin-right: 10px; }
        .tray .bell { width: 17px; height: 20px; margin-right: 22px; color: #e4d5f8; }
        .tray .copilot { width: 30px; height: 29px; }
      </style>
      <button class="weather"><ui-icon name="weather"></ui-icon><span>85°F<small>Mostly cloudy</small></span></button>
      <div class="apps">
        <button class="start" aria-label="Start"><ui-icon name="windows"></ui-icon></button>
        <div class="find">
          <label for="s" aria-label="Search"><ui-icon name="taskLens"></ui-icon></label>
          <input id="s" type="text" placeholder="Search">
          <ui-icon class="fruit" name="fruit"></ui-icon>
        </div>
        <button aria-label="Task view"><ui-icon name="taskview"></ui-icon></button>
        <button aria-label="File Explorer"><ui-icon name="explorer"></ui-icon></button>
        <button aria-label="Spotify"><ui-icon name="spotify"></ui-icon></button>
        <button aria-label="Store"><ui-icon name="store"></ui-icon></button>
        <button aria-label="Code"><ui-icon name="vscode"></ui-icon></button>
        <button aria-label="Disc"><ui-icon name="disc"></ui-icon></button>
        <button class="run" aria-label="WhatsApp"><ui-icon name="whatsapp"></ui-icon></button>
        <button class="run on" aria-label="Chrome"><ui-icon name="chrome"></ui-icon><ui-icon class="cat" name="cat"></ui-icon></button>
        <button class="run" aria-label="Photos"><ui-icon name="photos"></ui-icon></button>
      </div>
      <div class="tray">
        <button aria-label="Hidden icons"><ui-icon class="up" name="up"></ui-icon></button>
        <ui-icon name="cloud"></ui-icon>
        <span class="lang">ENG<br>IN</span>
        <ui-icon class="gap" name="wifi"></ui-icon>
        <ui-icon class="gap" name="volume"></ui-icon>
        <ui-icon name="battery"></ui-icon>
        <span class="time">10:21<br>09-07-2024</span>
        <ui-icon class="bell" name="bell"></ui-icon>
        <ui-icon class="copilot" name="copilot"></ui-icon>
      </div>
    `);
  }
}
customElements.define('task-bar', TaskBar);
</script>
</body>
</html>
